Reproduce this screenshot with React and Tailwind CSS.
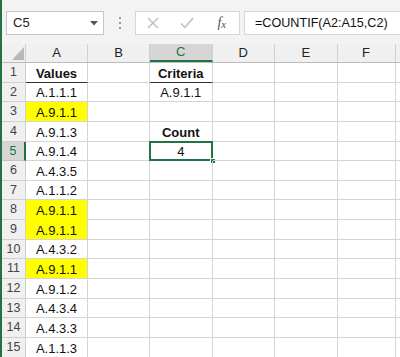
import React from "react";

const rows = [
  { a: "Values", c: "Criteria", bold: true, underline: true },
  { a: "A.1.1.1", c: "A.9.1.1" },
  { a: "A.9.1.1", y: true },
  { a: "A.9.1.3", c: "Count", cBold: true },
  { a: "A.9.1.4", c: "4", sel: true },
  { a: "A.4.3.5" },
  { a: "A.1.1.2" },
  { a: "A.9.1.1", y: true, yNext: true },
  { a: "A.9.1.1", y: true },
  { a: "A.4.3.2" },
  { a: "A.9.1.1", y: true },
  { a: "A.9.1.2" },
  { a: "A.4.3.4" },
  { a: "A.4.3.3" },
  { a: "A.1.1.3" },
];

function Cell({ w, children, className = "" }) {
  return (
    <div
      className={`relative shrink-0 h-full border-r border-b border-[#d4d4d4] flex items-end justify-center pb-[2px] leading-[13px] text-[13px] text-[#111] ${w} ${className}`}
    >
      {children}
    </div>
  );
}

export default function App() {
  return (
    <div className="w-[400px] h-[357px] overflow-hidden bg-white flex font-['Liberation_Sans',sans-serif]">
      <div className="w-[2px] shrink-0 bg-[#217346]" />
      <div className="flex-1 flex flex-col min-w-0">
        {/* formula bar */}
        <div className="h-[44px] shrink-0 bg-[#f3f3f3] flex items-start pt-[11px] pl-[4px]">
          <div className="w-[98px] h-[24px] bg-white border border-[#c6c6c6] flex items-center justify-between pl-[6px] pr-[5px] text-[13px] text-[#222]">
            <span>C5</span>
            <svg width="8" height="5" viewBox="0 0 8 5">
              <path d="M0 0 L8 0 L4 4.5 Z" fill="#555" />
            </svg>
          </div>
          <div className="w-[31px] h-[24px] flex flex-col items-center justify-center gap-[3px]">
            <div className="w-[2px] h-[2px] bg-[#9a9a9a]" />
            <div className="w-[2px] h-[2px] bg-[#9a9a9a]" />
            <div className="w-[2px] h-[2px] bg-[#9a9a9a]" />
          </div>
          <div className="w-[105px] h-[24px] bg-white border border-[#d6d6d6] flex items-center">
            <div className="w-[35px] flex justify-center">
              <svg width="12" height="12" viewBox="0 0 12 12">
                <path d="M1 1 L11 11 M11 1 L1 11" stroke="#bdbdbd" strokeWidth="1.4" fill="none" />
              </svg>
            </div>
            <div className="w-[35px] flex justify-center">
              <svg width="14" height="12" viewBox="0 0 14 12">
                <path d="M1 6.5 L5 10.5 L13 1" stroke="#bdbdbd" strokeWidth="1.5" fill="none" />
              </svg>
            </div>
            <div className="w-[35px] flex justify-center font-['Liberation_Serif',serif] italic text-[#555] text-[14px] leading-none">
              <span>f</span>
              <span className="text-[11px] mt-[3px]">x</span>
            </div>
          </div>
          <div className="ml-[4px] flex-1 h-[24px] bg-white border-y border-l border-[#d6d6d6] flex items-center pl-[10px] text-[12.6px] text-[#111] whitespace-nowrap">
            =COUNTIF(A2:A15,C2)
          </div>
        </div>

        {/* column headers */}
        <div className="h-[19px] shrink-0 flex bg-[#f0f0f0] border-b border-[#bcbcbc] text-[13px] text-[#222]">
          <div className="w-[24px] shrink-0 h-full border-r border-[#d0d0d0] relative">
            <svg className="absolute left-[10px] top-[3px]" width="12" height="13" viewBox="0 0 12 13">
              <path d="M12 0 L12 13 L0 13 Z" fill="#b8b8b8" />
            </svg>
          </div>
          {[
            ["A", "w-[62px]"],
            ["B", "w-[62px]"],
            ["C", "w-[62.5px]"],
            ["D", "w-[62.5px]"],
            ["E", "w-[62.5px]"],
            ["F", "w-[58px]"],
          ].map(([l, w]) => (
            <div
              key={l}
              className={`${w} shrink-0 h-full border-r border-[#d0d0d0] flex items-center justify-center ${
                l === "C" ? "bg-[#d6d6d6] text-[#217346] border-b-2 border-b-[#217346]" : ""
              }`}
            >
              {l}
            </div>
          ))}
          <div className="flex-1" />
        </div>

        {/* rows */}
        {rows.map((r, i) => (
          <div key={i} className="h-[19.65px] shrink-0 flex">
            <div
              className={`w-[24px] shrink-0 h-full border-b border-r flex items-center justify-center text-[12.5px] ${
                r.sel
                  ? "bg-[#d6d6d6] text-[#217346] border-b-[#c4c4c4] border-r-2 border-r-[#217346]"
                  : "bg-[#f0f0f0] text-[#444] border-[#d0d0d0]"
              }`}
            >
              {i + 1}
            </div>
            <Cell
              w="w-[62px]"
              className={`${r.y ? "bg-[#ffff00]" : ""} ${r.yNext ? "border-b-[#ffff00]" : ""} ${
                r.underline ? "border-b-[#333]" : ""
              } ${r.bold ? "font-bold" : ""}`}
            >
              {r.a}
            </Cell>
            <Cell w="w-[62px]" />
            <Cell
              w="w-[62.5px]"
              className={`${r.underline ? "border-b-[#333]" : ""} ${r.bold || r.cBold ? "font-bold" : ""}`}
            >
              {r.c}
              {r.sel && (
                <>
                  <div className="absolute -left-[1px] -top-[1px] -right-[1px] -bottom-[1px] border-2 border-[#217346]" />
                  <div className="absolute -right-[4px] -bottom-[4px] w-[6px] h-[6px] bg-[#217346] border border-white" />
                </>
              )}
            </Cell>
            <Cell w="w-[62.5px]" />
            <Cell w="w-[62.5px]" />
            <Cell w="w-[58px]" />
            <div className="flex-1 h-full border-b border-[#d4d4d4]" />
          </div>
        ))}
      </div>
    </div>
  );
}
